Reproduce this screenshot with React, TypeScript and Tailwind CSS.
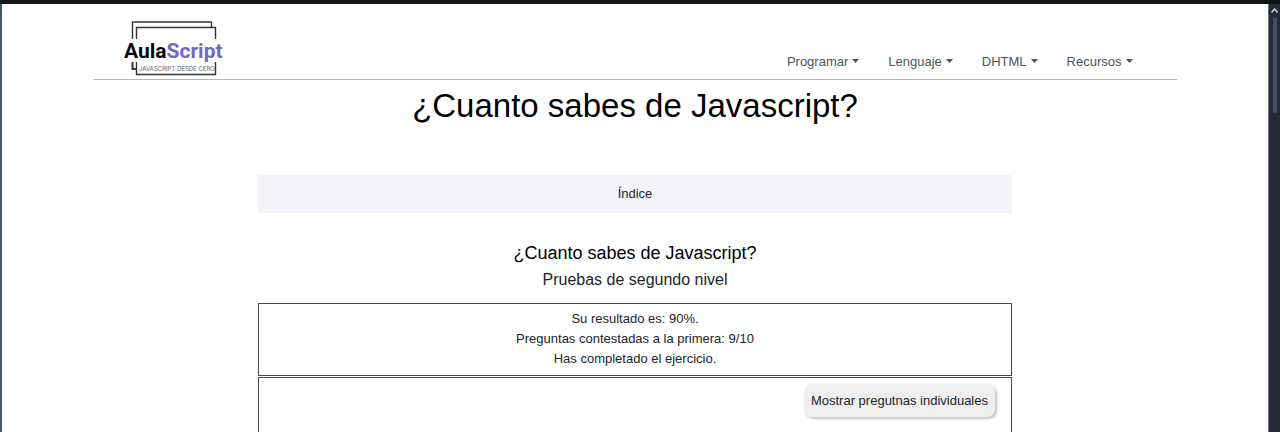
const menus = ["Programar", "Lenguaje", "DHTML", "Recursos"];

function Logo() {
  return (
    <svg width="102" height="58" viewBox="0 0 102 58" role="img" aria-label="AulaScript">
      <g fill="none" stroke="#333436" strokeWidth="1.4">
        <path d="M10.500 18V1H89.500V6.500" />
        <path d="M14.500 18V6.500H93.500V18" />
        <path d="M10.500 41V48H15" strokeWidth="2" />
        <path d="M14.500 41V53.500H93.500V41" />
      </g>
      <text y="37" fontFamily="Roboto, sans-serif" fontWeight="700" fontSize="21">
        <tspan x="2" fill="#08080c">Aula</tspan>
        <tspan fill="#7068c8">Script</tspan>
      </text>
      <text x="17" y="50" fontFamily="Inter, sans-serif" fontSize="6" fill="#66666b">
        JAVASCRIPT DESDE CERO
      </text>
    </svg>
  );
}

function Header() {
  return (
    <header className="flex h-19 w-full max-w-[1083px] items-end justify-between border-b border-[#b4b6b6] pr-11 pl-7">
      <a href="#inicio">
        <Logo />
      </a>
      <nav className="mb-[7px] flex gap-[29px] text-[13px] leading-5 text-[#4a5557]">
        {menus.map((name) => (
          <button key={name} type="button" className="flex items-center gap-1">
            {name}
            <svg width="7" height="6" viewBox="0 0 7 6" aria-hidden="true">
              <path d="M0 0H7L3.500 4Z" fill="currentColor" />
            </svg>
          </button>
        ))}
      </nav>
    </header>
  );
}

function ScrollTrack() {
  return (
    <div className="flex w-3 shrink-0 flex-col items-center border-l border-[#6e767e] bg-[#242a38] pt-1" aria-hidden="true">
      <svg width="7" height="5" viewBox="0 0 7 5">
        <path d="M0.500 4.500L3.500 1L6.500 4.500" fill="none" stroke="#c3c7ce" strokeWidth="1.6" />
      </svg>
      <div className="mt-1 h-24 w-1 rounded-sm bg-[#464e63]" />
    </div>
  );
}

export default function App() {
  return (
    <div className="flex h-screen flex-col overflow-hidden bg-white font-['Liberation_Sans',Arial,sans-serif] text-[#212529]">
      <div className="h-1 shrink-0 bg-[#131415]" />
      <div className="flex min-h-0 flex-1 border-l-2 border-[#3c5966]">
        <div className="flex min-w-0 flex-1 flex-col items-center">
          <Header />
          <h1 className="mt-1 text-center text-[33px] leading-11 text-black">¿Cuanto sabes de Javascript?</h1>
          <main className="mt-[47px] flex w-full max-w-[754px] flex-1 flex-col text-center text-[13px] leading-5">
            <button type="button" className="h-[38px] shrink-0 bg-[#f5f3fa]">
              Índice
            </button>
            <h2 className="mt-7 text-[18px] leading-6 text-black">¿Cuanto sabes de Javascript?</h2>
            <h3 className="mt-[3px] text-[16px] leading-6">Pruebas de segundo nivel</h3>
            <section className="mt-[11px] border border-[#4a4a4e] px-4 pt-[5px] pb-[6px]">
              <p>Su resultado es: 90%.</p>
              <p>Preguntas contestadas a la primera: 9/10</p>
              <p>Has completado el ejercicio.</p>
            </section>
            <section className="mt-px flex flex-1 items-start justify-end border border-b-0 border-[#4a4a4e] px-4 py-[6px]">
              <button
                type="button"
                className="h-[33px] rounded-lg bg-[#efefef] px-[7px] shadow-[2px_2px_3px_#c4c4c4]"
              >
                Mostrar pregutnas individuales
              </button>
            </section>
          </main>
        </div>
        <ScrollTrack />
      </div>
    </div>
  );
}
